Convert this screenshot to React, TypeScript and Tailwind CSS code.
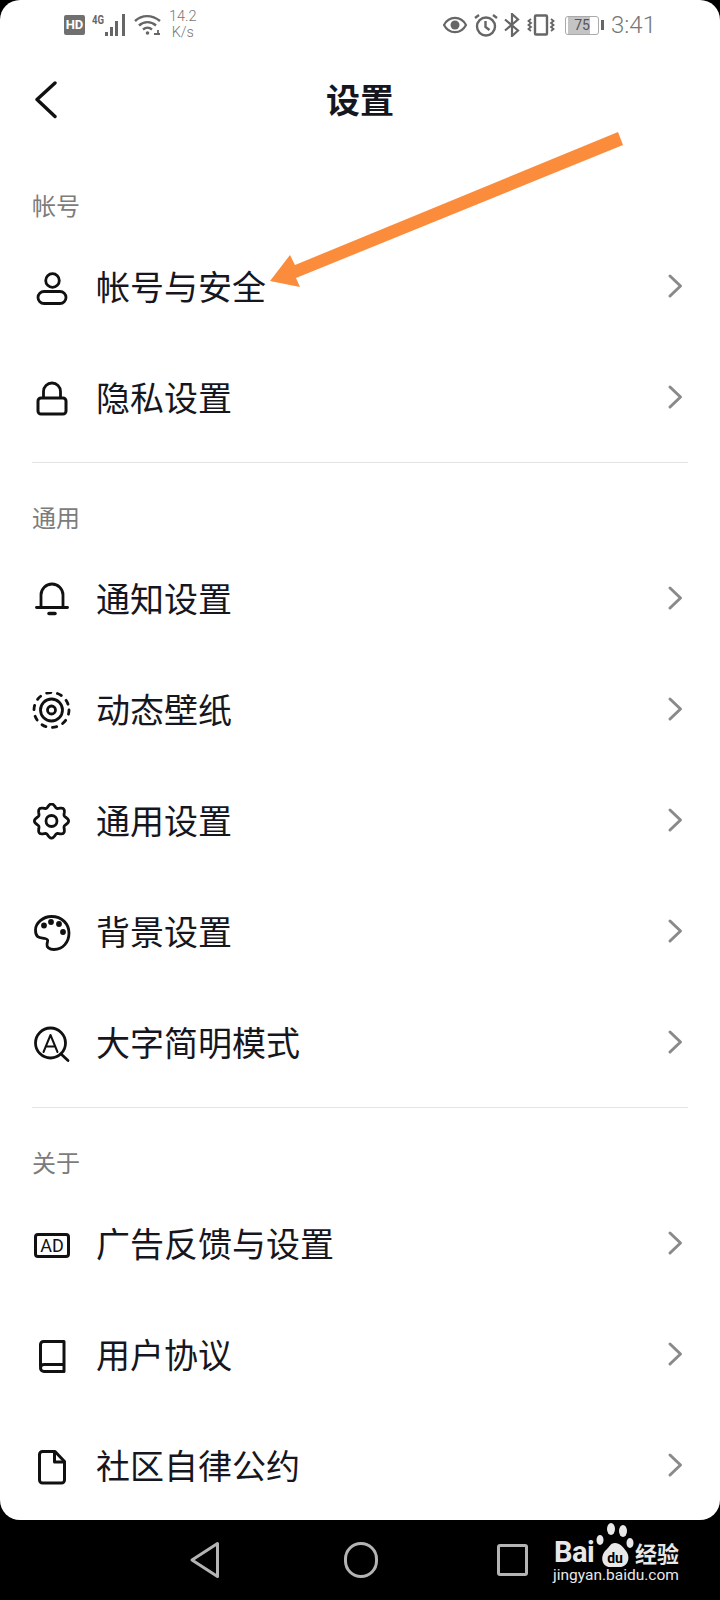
import type { ReactNode } from 'react'

const font = { fontFamily: '"Noto Sans CJK SC", sans-serif' }

function Icon({ children }: { children: ReactNode }) {
  return (
    <svg viewBox="0 0 40 40" fill="none" stroke="#111" strokeWidth="2.8" strokeLinecap="round" strokeLinejoin="round" className="w-10 h-10 shrink-0">
      {children}
    </svg>
  )
}

// scalloped outline of the settings cog
const cogPath = (() => {
  const pts: string[] = []
  for (let i = 0; i < 96; i++) {
    const a = (i / 96) * Math.PI * 2 - Math.PI / 2
    const r = 15.4 + 1.7 * Math.cos(8 * (a + Math.PI / 2))
    pts.push(`${(19.5 + r * Math.cos(a)).toFixed(2)} ${(18 + r * Math.sin(a)).toFixed(2)}`)
  }
  return `M${pts.join('L')}z`
})()

const icons: Record<string, ReactNode> = {
  user: (
    <Icon>
      <circle cx="20.5" cy="11.5" r="6.8" />
      <rect x="6" y="22.5" width="28" height="12" rx="6" />
    </Icon>
  ),
  lock: (
    <Icon>
      <path d="M11.5 17v-5.5a8.5 8.5 0 0 1 17 0V17" />
      <rect x="6" y="18" width="28" height="16" rx="3" strokeWidth="3" />
    </Icon>
  ),
  bell: (
    <Icon>
      <path d="M4.5 26.5h31" />
      <path d="M9 26.5V14a11 11 0 0 1 22 0v12.5" />
      <path d="M17 32.5h6" strokeWidth="3.5" />
    </Icon>
  ),
  wallpaper: (
    <Icon>
      <circle cx="19.5" cy="18" r="17.5" strokeDasharray="4.3 6.7" />
      <circle cx="19.5" cy="18" r="11" />
      <circle cx="19.5" cy="18" r="4" />
    </Icon>
  ),
  gear: (
    <Icon>
      <path d={cogPath} />
      <circle cx="19.5" cy="18" r="5.5" />
    </Icon>
  ),
  palette: (
    <Icon>
      <path d="M19.5 2.5C30 2.5 37 10 37 19c0 9-6 16.5-15 16.5-5 0-7.5-2.500-7-5.500.5-3 2-4.500-2-5.500-4-1-9.500.5-9.500-8.500 0-7 7.500-13.500 16-13.500z" />
      <circle cx="12" cy="11.5" r="1.5" fill="#111" />
      <circle cx="19" cy="8" r="1.5" fill="#111" />
      <circle cx="27" cy="10" r="1.5" fill="#111" />
      <circle cx="31" cy="18" r="1.5" fill="#111" />
    </Icon>
  ),
  font: (
    <Icon>
      <circle cx="18.5" cy="18" r="15" />
      <path d="M29 29l7 6.5" />
      <path d="M11.5 27l7-17 7 17M14 21.5h9" strokeWidth="2" />
    </Icon>
  ),
  ad: (
    <Icon>
      <rect x="3.5" y="8.5" width="33" height="22" rx="2.5" strokeWidth="3" />
      <text x="20" y="26" textAnchor="middle" fontSize="18" fontFamily="Roboto, sans-serif" fill="#111" stroke="none">AD</text>
    </Icon>
  ),
  book: (
    <Icon>
      <path d="M8.5 29.5V7.5a3 3 0 0 1 3-3H32v30H12a3.500 3.500 0 0 1-3.500-3.500 3.500 3.500 0 0 1 3.500-3.500h20" strokeWidth="3" />
    </Icon>
  ),
  file: (
    <Icon>
      <path d="M10.5 3.500H23l9.500 10V32a3 3 0 0 1-3 3h-19a3 3 0 0 1-3-3V6.500a3 3 0 0 1 3-3z" strokeWidth="3" />
      <path d="M22.5 4v10H32" strokeWidth="3" />
    </Icon>
  ),
}

const sections = [
  {
    title: '帐号',
    rows: [
      { icon: 'user', label: '帐号与安全' },
      { icon: 'lock', label: '隐私设置' },
    ],
  },
  {
    title: '通用',
    rows: [
      { icon: 'bell', label: '通知设置' },
      { icon: 'wallpaper', label: '动态壁纸' },
      { icon: 'gear', label: '通用设置' },
      { icon: 'palette', label: '背景设置' },
      { icon: 'font', label: '大字简明模式' },
    ],
  },
  {
    title: '关于',
    rows: [
      { icon: 'ad', label: '广告反馈与设置' },
      { icon: 'book', label: '用户协议' },
      { icon: 'file', label: '社区自律公约' },
    ],
  },
]

function StatusBar() {
  return (
    <div className="h-[50px] flex items-center justify-between pl-[64px] pr-[64px] text-[#6b6b6b]" style={{ fontFamily: 'Roboto, sans-serif' }}>
      <div className="flex items-center">
        <div className="w-[21px] h-[20px] rounded-[2px] bg-[#707070] text-white text-[13px] font-bold leading-[20px] text-center">HD</div>
        <svg width="36" height="24" viewBox="0 0 36 24" className="ml-[7px]">
          <text x="0" y="11" fontSize="12" fontWeight="700" fill="#666" fontFamily="Roboto, sans-serif" textLength="12" lengthAdjust="spacingAndGlyphs">4G</text>
          <g fill="#666">
            <rect x="13" y="19" width="3" height="4" />
            <rect x="18" y="14" width="3" height="9" />
            <rect x="23" y="8" width="3" height="15" />
            <rect x="30" y="1" width="3" height="22" />
          </g>
        </svg>
        <svg width="27" height="22" viewBox="0 0 27 22" fill="none" stroke="#666" strokeWidth="2.4" className="ml-[6px]">
          <path d="M1 7c7-6.500 17-6.500 25 0" />
          <path d="M5 11.500c5-4.500 12-4.500 17 0" />
          <path d="M9 15.500c3-2.500 6-2.500 9 0" />
          <circle cx="13.500" cy="19" r="1.800" fill="#666" stroke="none" />
          <path d="M20 20h6M24 16v5" strokeWidth="1.800" />
        </svg>
        <div className="ml-[8px] text-[14.5px] leading-[16px] font-light text-center text-[#777]">
          <div>14.2</div>
          <div>K/s</div>
        </div>
      </div>
      <div className="flex items-center">
        <svg width="24" height="18" viewBox="0 0 24 18" fill="none" stroke="#666" strokeWidth="2.2">
          <path d="M1 9c5-9.500 17-9.500 22 0-5 9.500-17 9.500-22 0z" />
          <circle cx="12" cy="9" r="4.500" fill="#666" stroke="none" />
        </svg>
        <svg width="24" height="24" viewBox="0 0 24 24" fill="none" stroke="#666" strokeWidth="2.4" className="ml-[7px]">
          <circle cx="12" cy="13.500" r="9" />
          <path d="M11.500 8v6l4 3" />
          <path d="M1 5l4-3M23 5l-4-3" />
        </svg>
        <svg width="16" height="24" viewBox="0 0 16 24" fill="none" stroke="#666" strokeWidth="2.2" className="ml-[6px]">
          <path d="M1 6.500l13 11-6 5.500V1l6 5.500-13 11" />
        </svg>
        <svg width="28" height="22" viewBox="0 0 28 22" fill="none" stroke="#666" className="ml-[7px]">
          <rect x="8" y="1.500" width="12" height="19" rx="1" strokeWidth="2.4" />
          <path d="M4 5l-2.500 2L4 9l-2.500 2L4 13l-2.500 2L4 17M24 5l2.500 2L24 9l2.500 2L24 13l2.500 2L24 17" strokeWidth="1.8" />
        </svg>
        <div className="ml-[10px] flex items-center">
          <div className="relative w-[34px] h-[19px] rounded-[3px] border border-[#aaa] overflow-hidden">
            <div className="h-full w-[68%] ml-[2px] bg-[#c4c4c4]" />
            <div className="absolute inset-0 text-[14px] leading-[17px] text-center text-[#555]">75</div>
          </div>
          <div className="ml-[2px] w-[3px] h-[10px] bg-[#666]" />
        </div>
        <div className="ml-[7px] text-[24px] leading-none font-light text-[#777]">3:41</div>
      </div>
    </div>
  )
}

function Header() {
  return (
    <div className="relative h-[102px] flex items-center justify-center">
      <svg width="24" height="38" viewBox="0 0 24 38" fill="none" stroke="#111" strokeWidth="3.4" strokeLinecap="round" strokeLinejoin="round" className="absolute left-[34px] top-[31px]">
        <path d="M21 2L3 18.500l18 17" />
      </svg>
      <span className="text-[34px] font-bold text-[#16161e] leading-none mb-[4px]">设置</span>
    </div>
  )
}

function Row({ icon, label }: { icon: string; label: string }) {
  return (
    <div className="h-[111px] flex items-center">
      {icons[icon]}
      <span className="ml-[24px] mb-[5px] flex-1 text-[34px] leading-none text-[#16161e]">{label}</span>
      <svg width="16" height="26" viewBox="0 0 16 26" fill="none" stroke="#8a8a8a" strokeWidth="3" strokeLinecap="round" strokeLinejoin="round" className="mb-[5px] mr-[5px]">
        <path d="M3 3l10.500 10L3 23" />
      </svg>
    </div>
  )
}

function NavBar() {
  return (
    <div className="relative h-[80px] bg-black flex items-center">
      <svg width="30" height="38" viewBox="0 0 30 38" fill="none" stroke="#b4b4b4" strokeWidth="3" strokeLinejoin="round" className="ml-[190px]">
        <path d="M27.500 2.500v33L2 19z" />
      </svg>
      <div className="ml-[124px] w-[34px] h-[36px] rounded-full border-[3px] border-[#b4b4b4]" />
      <div className="ml-[119px] w-[31px] h-[32px] rounded-[3px] border-[3px] border-[#b4b4b4]" />
      {/* watermark */}
      <div className="absolute left-[553px] top-[2px] w-[130px] h-[66px] text-[#e8e8e8]" style={{ fontFamily: 'Roboto, sans-serif' }}>
        <svg width="90" height="50" viewBox="0 0 90 50" className="absolute left-0 top-0" fill="#e8e8e8">
          <ellipse cx="47" cy="18" rx="3.500" ry="5" />
          <ellipse cx="58" cy="7" rx="4" ry="6" />
          <ellipse cx="70" cy="9" rx="4" ry="6" />
          <ellipse cx="77" cy="21" rx="3.500" ry="5" />
          <path d="M62 21c5 0 8 4 11 8 5 6 2 16-6 16H57c-8 0-10-10-5-16 4-3 5-8 10-8z" />
          <text x="62" y="41" textAnchor="middle" fontSize="14" fontWeight="700" fill="#000" fontFamily="Roboto, sans-serif">du</text>
        </svg>
        <span className="absolute left-[1px] top-[16px] text-[29px] leading-none font-bold tracking-[-0.5px]">Bai</span>
        <span className="absolute left-[82px] top-[19px] text-[22px] leading-none font-bold" style={font}>经验</span>
        <span className="absolute left-0 top-[46px] text-[15.5px] leading-none">jingyan.baidu.com</span>
      </div>
    </div>
  )
}

export default function App() {
  return (
    <div className="w-[720px] h-[1600px] bg-black overflow-hidden" style={font}>
      <div className="relative h-[1520px] bg-white rounded-[20px] overflow-hidden">
        <StatusBar />
        <Header />
        <div className="px-[32px] pt-[38px]">
          {sections.map((section, i) => (
            <div key={section.title}>
              {i > 0 && <div className="h-px bg-[#e4e4e4] mt-[7px] mb-[39px]" />}
              <div className="h-[34px] text-[24px] leading-[30px] text-[#7c7c7c]">{section.title}</div>
              <div className="mt-[9px]">
                {section.rows.map((row) => (
                  <Row key={row.label} icon={row.icon} label={row.label} />
                ))}
              </div>
            </div>
          ))}
        </div>
        {/* annotation arrow */}
        <svg width="380" height="180" viewBox="0 0 380 180" className="absolute left-[260px] top-[120px]" fill="#fb8c3c">
          <path d="M358 12l5 13-327 133 4 9-30-6 20-26 5 10z" />
        </svg>
      </div>
      <NavBar />
    </div>
  )
}
